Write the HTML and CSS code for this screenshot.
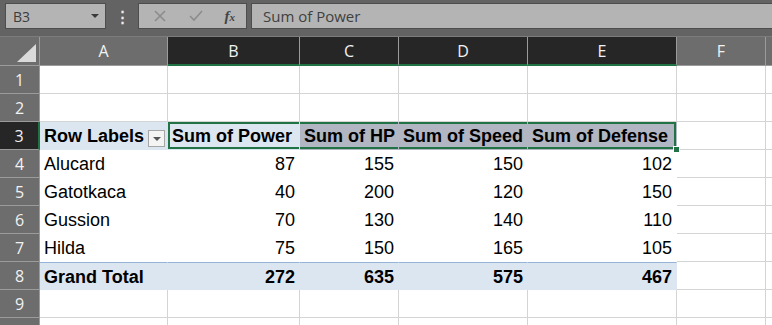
FILE: index.html
```html
<!DOCTYPE html>
<html lang="en">
<head>
    <meta charset="UTF-8">
    <title>Pivot</title>
    <link rel="stylesheet" href="styles.css">
</head>
<body>
<div class="toolbar">
    <div class="namebox"><span>B3</span><span class="drop"></span></div>
    <div class="dots">&#8942;</div>
    <div class="btns">
        <svg width="14" height="14" viewBox="0 0 14 14"><path d="M2 2 L12 12 M12 2 L2 12" stroke="#8c8c8c" stroke-width="1.6" fill="none"/></svg>
        <svg width="16" height="14" viewBox="0 0 16 14"><path d="M2 7 L6 11 L14 2" stroke="#8c8c8c" stroke-width="1.6" fill="none"/></svg>
        <span class="fx">f<small>x</small></span>
    </div>
    <div class="formula">Sum of Power</div>
</div>
<div class="sheet">
    <div class="ch corner"><span class="tri"></span></div>
    <div class="ch">A</div>
    <div class="ch on">B</div>
    <div class="ch on">C</div>
    <div class="ch on">D</div>
    <div class="ch on">E</div>
    <div class="ch">F</div>
    <div class="ch"></div>

    <div class="rh">1</div><div class="c"></div><div class="c"></div><div class="c"></div><div class="c"></div><div class="c"></div><div class="c"></div><div class="c"></div>
    <div class="rh">2</div><div class="c"></div><div class="c"></div><div class="c"></div><div class="c"></div><div class="c"></div><div class="c"></div><div class="c"></div>

    <div class="rh on">3</div>
    <div class="c pv head">Row Labels<span class="filter"></span></div>
    <div class="c pv head b sel-l">Sum of Power</div>
    <div class="c pv head b sel sel-m">Sum of HP</div>
    <div class="c pv head b sel sel-m">Sum of Speed</div>
    <div class="c pv head b sel sel-r">Sum of Defense<span class="handle"></span></div>
    <div class="c"></div><div class="c"></div>

    <div class="rh">4</div><div class="c pv">Alucard</div><div class="c pv n">87</div><div class="c pv n">155</div><div class="c pv n">150</div><div class="c pv n">102</div><div class="c"></div><div class="c"></div>
    <div class="rh">5</div><div class="c pv">Gatotkaca</div><div class="c pv n">40</div><div class="c pv n">200</div><div class="c pv n">120</div><div class="c pv n">150</div><div class="c"></div><div class="c"></div>
    <div class="rh">6</div><div class="c pv">Gussion</div><div class="c pv n">70</div><div class="c pv n">130</div><div class="c pv n">140</div><div class="c pv n">110</div><div class="c"></div><div class="c"></div>
    <div class="rh">7</div><div class="c pv">Hilda</div><div class="c pv n">75</div><div class="c pv n">150</div><div class="c pv n">165</div><div class="c pv n">105</div><div class="c"></div><div class="c"></div>

    <div class="rh">8</div>
    <div class="c pv total">Grand Total</div>
    <div class="c pv total n">272</div>
    <div class="c pv total n">635</div>
    <div class="c pv total n">575</div>
    <div class="c pv total n">467</div>
    <div class="c"></div><div class="c"></div>

    <div class="rh">9</div><div class="c"></div><div class="c"></div><div class="c"></div><div class="c"></div><div class="c"></div><div class="c"></div><div class="c"></div>
    <div class="rh"></div><div class="c"></div><div class="c"></div><div class="c"></div><div class="c"></div><div class="c"></div><div class="c"></div><div class="c"></div>
</div>
</body>
</html>
```

FILE: styles.css
```css
* {
    box-sizing: border-box;
}
body {
    margin: 0;
    width: 772px;
    height: 325px;
    overflow: hidden;
    background: #fff;
    font-family: "Liberation Sans", Arial, sans-serif;
}
.toolbar {
    height: 37px;
    background: #636363;
    border-bottom: 1px solid #7c7c7c;
    display: flex;
    align-items: flex-start;
    padding: 3px 0 0 5px;
    font-family: "Open Sans", sans-serif;
}
.namebox {
    width: 101px;
    height: 26px;
    background: #b4b4b4;
    border: 1px solid #4d4d4d;
    display: flex;
    align-items: center;
    justify-content: space-between;
    padding: 0 6px 0 7px;
    color: #3c3c3c;
    font-size: 14px;
}
.drop {
    width: 0;
    height: 0;
    border-left: 4px solid transparent;
    border-right: 4px solid transparent;
    border-top: 4px solid #3a3a3a;
}
.dots {
    width: 32px;
    text-align: center;
    color: #f0f0f0;
    font-size: 15px;
    line-height: 26px;
    font-weight: bold;
}
.btns {
    width: 109px;
    height: 26px;
    background: #b4b4b4;
    border: 1px solid #4d4d4d;
    display: flex;
    align-items: center;
    justify-content: space-between;
    padding: 0 11px 0 14px;
}
.fx {
    font-family: "Liberation Serif", serif;
    font-style: italic;
    font-weight: bold;
    font-size: 15px;
    color: #444;
}
.fx small {
    font-size: 11px;
}
.formula {
    flex: 1;
    margin-left: 4px;
    height: 26px;
    background: #b4b4b4;
    border: 1px solid #4d4d4d;
    border-right: none;
    padding-left: 11px;
    color: #404040;
    font-size: 15px;
    line-height: 24px;
}
.sheet {
    display: grid;
    grid-template-columns: 40px 128px 132px 99px 129px 149px 89px 1fr;
    grid-template-rows: 29px repeat(10, 28px);
}
.ch {
    background: #6d6d6d;
    color: #f2f2f2;
    font-family: "Open Sans", sans-serif;
    font-size: 16px;
    display: flex;
    align-items: center;
    justify-content: center;
    border-right: 1px solid #9b9b9b;
    border-bottom: 1px solid #9b9b9b;
}
.ch.on {
    background: #262626;
    border-bottom: 2px solid #217346;
}
.corner {
    position: relative;
}
.tri {
    position: absolute;
    right: 3px;
    bottom: 3px;
    width: 0;
    height: 0;
    border-left: 19px solid transparent;
    border-bottom: 18px solid #dadada;
}
.rh {
    background: #6d6d6d;
    color: #f2f2f2;
    font-family: "Open Sans", sans-serif;
    font-size: 16px;
    display: flex;
    align-items: center;
    justify-content: center;
    border-right: 1px solid #9b9b9b;
    border-bottom: 1px solid #9b9b9b;
}
.rh.on {
    background: #262626;
    border-right: 2px solid #217346;
}
.c {
    border-right: 1px solid #d4d4d4;
    border-bottom: 1px solid #d4d4d4;
    font-size: 18px;
    color: #000;
    display: flex;
    align-items: center;
    padding: 2px 4px 0;
    white-space: nowrap;
}
.pv {
    border-color: #fff;
    background: #fff;
}
.n {
    justify-content: flex-end;
}
.head {
    background: #dce6f1;
    border-color: #dce6f1;
    font-weight: bold;
    position: relative;
}
.filter {
    position: absolute;
    right: 2px;
    top: 8px;
    width: 17px;
    height: 17px;
    background: #f4f4f4;
    border: 1px solid #a6a6a6;
}
.filter::after {
    content: "";
    position: absolute;
    left: 4px;
    top: 6px;
    border-left: 4px solid transparent;
    border-right: 4px solid transparent;
    border-top: 4px solid #555;
}
.sel {
    background: #b1b6c2;
    border-color: #b1b6c2;
}
.sel-l {
    box-shadow: inset 2px 2px 0 #217346, inset 0 -2px 0 #217346;
}
.sel-m {
    box-shadow: inset 0 2px 0 #217346, inset 0 -2px 0 #217346;
}
.sel-r {
    box-shadow: inset -2px 2px 0 #217346, inset 0 -2px 0 #217346;
}
.handle {
    position: absolute;
    right: -4px;
    bottom: -4px;
    width: 7px;
    height: 7px;
    background: #217346;
    border: 1px solid #fff;
}
.total {
    background: #dce6f1;
    border-color: #dce6f1;
    border-top: 1px solid #95b3d7;
    font-weight: bold;
}
```
